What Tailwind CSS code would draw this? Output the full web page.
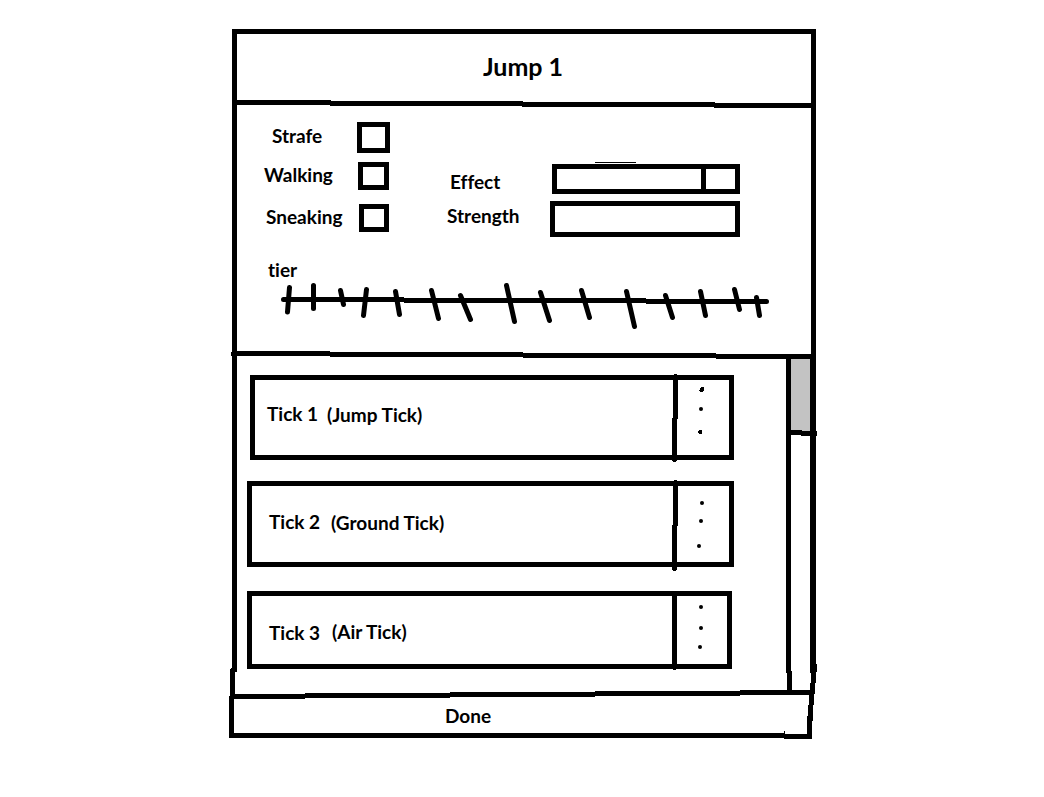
<!DOCTYPE html>
<html lang="en">
<head>
<meta charset="utf-8">
<meta name="viewport" content="width=device-width, initial-scale=1">
<title>Jump 1</title>
<script src="https://cdn.jsdelivr.net/npm/@tailwindcss/browser@4"></script>
</head>
<body class="bg-white pt-[29px] pl-0.5 font-['Lato',sans-serif] text-[19px]/6 font-bold text-black [font-variant-ligatures:none]">
<main class="relative mx-auto w-full max-w-[588px]">
  <!-- Hand-drawn frame and dividers -->
  <svg class="pointer-events-none absolute inset-0 z-10 size-full" viewBox="229 29 588 710" preserveAspectRatio="none" shape-rendering="crispEdges" aria-hidden="true">
    <path d="M232 29H816V34H232ZM232 29H237V672H232ZM231 668H235V698H230V669ZM229 696H234V738H229ZM229 733H785V738H229ZM784 731H785V734H812V739H784Z"/>
    <path d="M811 29H816V360H811ZM810 355H816V664H817V672H816V683H815V694H814V705H813V721H812V739H807V716H808V705H809V694H810V683H811V673H810Z"/>
    <path d="M234 100H331V105H234ZM330 101H523V106H330ZM522 102H715V107H522ZM714 103H812V108H714Z"/>
    <path d="M231 352H330V356H231ZM232 351H330V356H232ZM330 352H523V357H330ZM523 353H716V358H523ZM716 354H812V359H716Z"/>
    <path d="M234 694H305V699H234ZM305 693H450V698H305ZM450 692H595V697H450ZM595 691H740V696H595ZM740 690H812V695H740Z"/>
    <path d="M786 357H791V673H786ZM787 671H792V692H787ZM788 430H802V435H788ZM801 431H817V436H801Z"/>
  </svg>

  <header class="flex h-[76px] items-center justify-center pb-0.5">
    <h1 class="text-[25px]/8">Jump 1</h1>
  </header>

  <section class="h-[250px] pt-[17px] pl-[35px]">
    <div class="flex items-start">
      <div class="flex w-[126px] flex-col">
        <div class="flex h-[31px] items-center">
          <label for="strafe" class="w-[93px] pb-[3px] pl-2">Strafe</label>
          <input id="strafe" type="checkbox" class="h-[31px] w-[33px] appearance-none border-5 border-black checked:bg-gray-400">
        </div>
        <div class="mt-[9px] flex h-7 items-center">
          <label for="walking" class="w-[94px] pb-0.5">Walking</label>
          <input id="walking" type="checkbox" class="h-7 w-[31px] appearance-none border-5 border-black checked:bg-gray-400">
        </div>
        <div class="mt-[14px] flex h-7 items-center">
          <label for="sneaking" class="w-[95px] pb-[3px] pl-0.5">Sneaking</label>
          <input id="sneaking" type="checkbox" class="h-7 w-[30px] appearance-none border-5 border-black checked:bg-gray-400">
        </div>
      </div>
      <div class="ml-[57px] flex w-[293px] flex-col pt-10">
        <div class="ml-[148px] h-px w-[41px] bg-black"></div>
        <div class="mt-px flex h-[30px] items-center">
          <label for="effect" class="w-[105px] pt-1.5 pl-[3px]">Effect</label>
          <div class="relative h-[30px] flex-1">
            <select id="effect" class="block size-full appearance-none border-5 border-black bg-white pr-9">
              <option value=""></option>
            </select>
            <span class="pointer-events-none absolute inset-y-0 right-[34px] w-[5px] bg-black"></span>
          </div>
        </div>
        <div class="mt-[7px] flex h-9 items-start">
          <label for="strength" class="w-[103px] pt-[3px]">Strength</label>
          <input id="strength" type="text" class="h-9 min-w-0 flex-1 border-5 border-black px-1">
        </div>
      </div>
    </div>

    <label for="tier" class="mt-[21px] mb-px ml-1 block">tier</label>
    <div class="relative ml-[17px] h-[46px] w-[488px]">
      <svg class="size-full" viewBox="281 283 488 46" fill="none" stroke="#000" stroke-width="5" stroke-linecap="round" aria-hidden="true">
        <path stroke-linecap="butt" shape-rendering="crispEdges" d="M284 299.500H404M404 300.500H646M646 301.500H766"/>
        <path d="M283.500 299.500h1M765.500 301.500h1M289.500 287.500 287.500 312M313.500 285.500V308.500M340.500 290.500 343.500 304.500M366.500 289.500 363.500 315.500M395.500 291.500 399.500 314.500M431.500 290.500 438.500 318.500M460.500 295.500 470.500 319.500M506.500 285.500 514.500 321.500M540.500 292.500 549.500 320.500M581.500 290.500 589.500 317.500M626.500 291.500 634.500 326.500M665.500 295.500 672.500 317.500M700.500 291.500 705.500 315.500M734.500 289.500 739.500 309.500M756.500 297.500 759.500 315.500"/>
      </svg>
      <input id="tier" type="range" min="1" max="15" value="1" class="absolute inset-0 size-full opacity-0">
    </div>
  </section>

  <section class="flex h-[337px]">
    <ul class="w-[505px] pt-5 pl-[18px]">
      <li class="ml-[3px] flex h-[85px] border-5 border-black pl-3">
        <span class="w-[60px] pt-[22px]">Tick 1</span>
        <span class="flex-1 pt-[23px]">(Jump Tick)</span>
        <button type="button" aria-label="Tick 1 options" class="h-[75px] w-[57px]">
          <svg class="size-full overflow-visible" viewBox="672 380 57 75" aria-hidden="true">
            <path shape-rendering="crispEdges" d="M674 374H677V375H678V419H677V461H676V462H673V461H672V418H673V375H674Z"/>
            <path d="M701 387H704V391H703V392H700V391H699V390H700V388H701Z"/><circle cx="701" cy="409" r="2"/><path d="M699 430H702V434H699V433H698V431H699Z"/>
          </svg>
        </button>
      </li>
      <li class="mt-[21px] flex h-[86px] border-5 border-black pl-[17px]">
        <span class="w-[62px] pt-6">Tick 2</span>
        <span class="flex-1 pt-[25px]">(Ground Tick)</span>
        <button type="button" aria-label="Tick 2 options" class="h-[76px] w-[57px]">
          <svg class="size-full overflow-visible" viewBox="672 486 57 76" aria-hidden="true">
            <path shape-rendering="crispEdges" d="M674 480H677V481H678V526H677V570H676V571H673V570H672V525H673V481H674Z"/>
            <circle cx="702" cy="503" r="2"/><circle cx="701" cy="521" r="2"/><circle cx="699" cy="546" r="2"/>
          </svg>
        </button>
      </li>
      <li class="mt-6 mr-0.5 flex h-[78px] border-5 border-black pl-[17px]">
        <span class="w-[63px] pt-[25px]">Tick 3</span>
        <span class="flex-1 pt-6">(Air Tick)</span>
        <button type="button" aria-label="Tick 3 options" class="h-[68px] w-[55px]">
          <svg class="size-full overflow-visible" viewBox="672 596 55 68" aria-hidden="true">
            <path shape-rendering="crispEdges" d="M672 594H677V669H676V670H673V669H672Z"/>
            <circle cx="701" cy="607" r="2"/><circle cx="701" cy="628" r="2"/><circle cx="700" cy="647" r="2"/>
          </svg>
        </button>
      </li>
    </ul>
    <div class="mr-1.5 ml-auto w-5 pt-1">
      <div class="h-[72px] bg-[#c3c3c3]"></div>
    </div>
  </section>

  <footer class="h-[47px]">
    <button type="button" class="block size-full pr-[110px]">Done</button>
  </footer>
</main>
</body>
</html>
